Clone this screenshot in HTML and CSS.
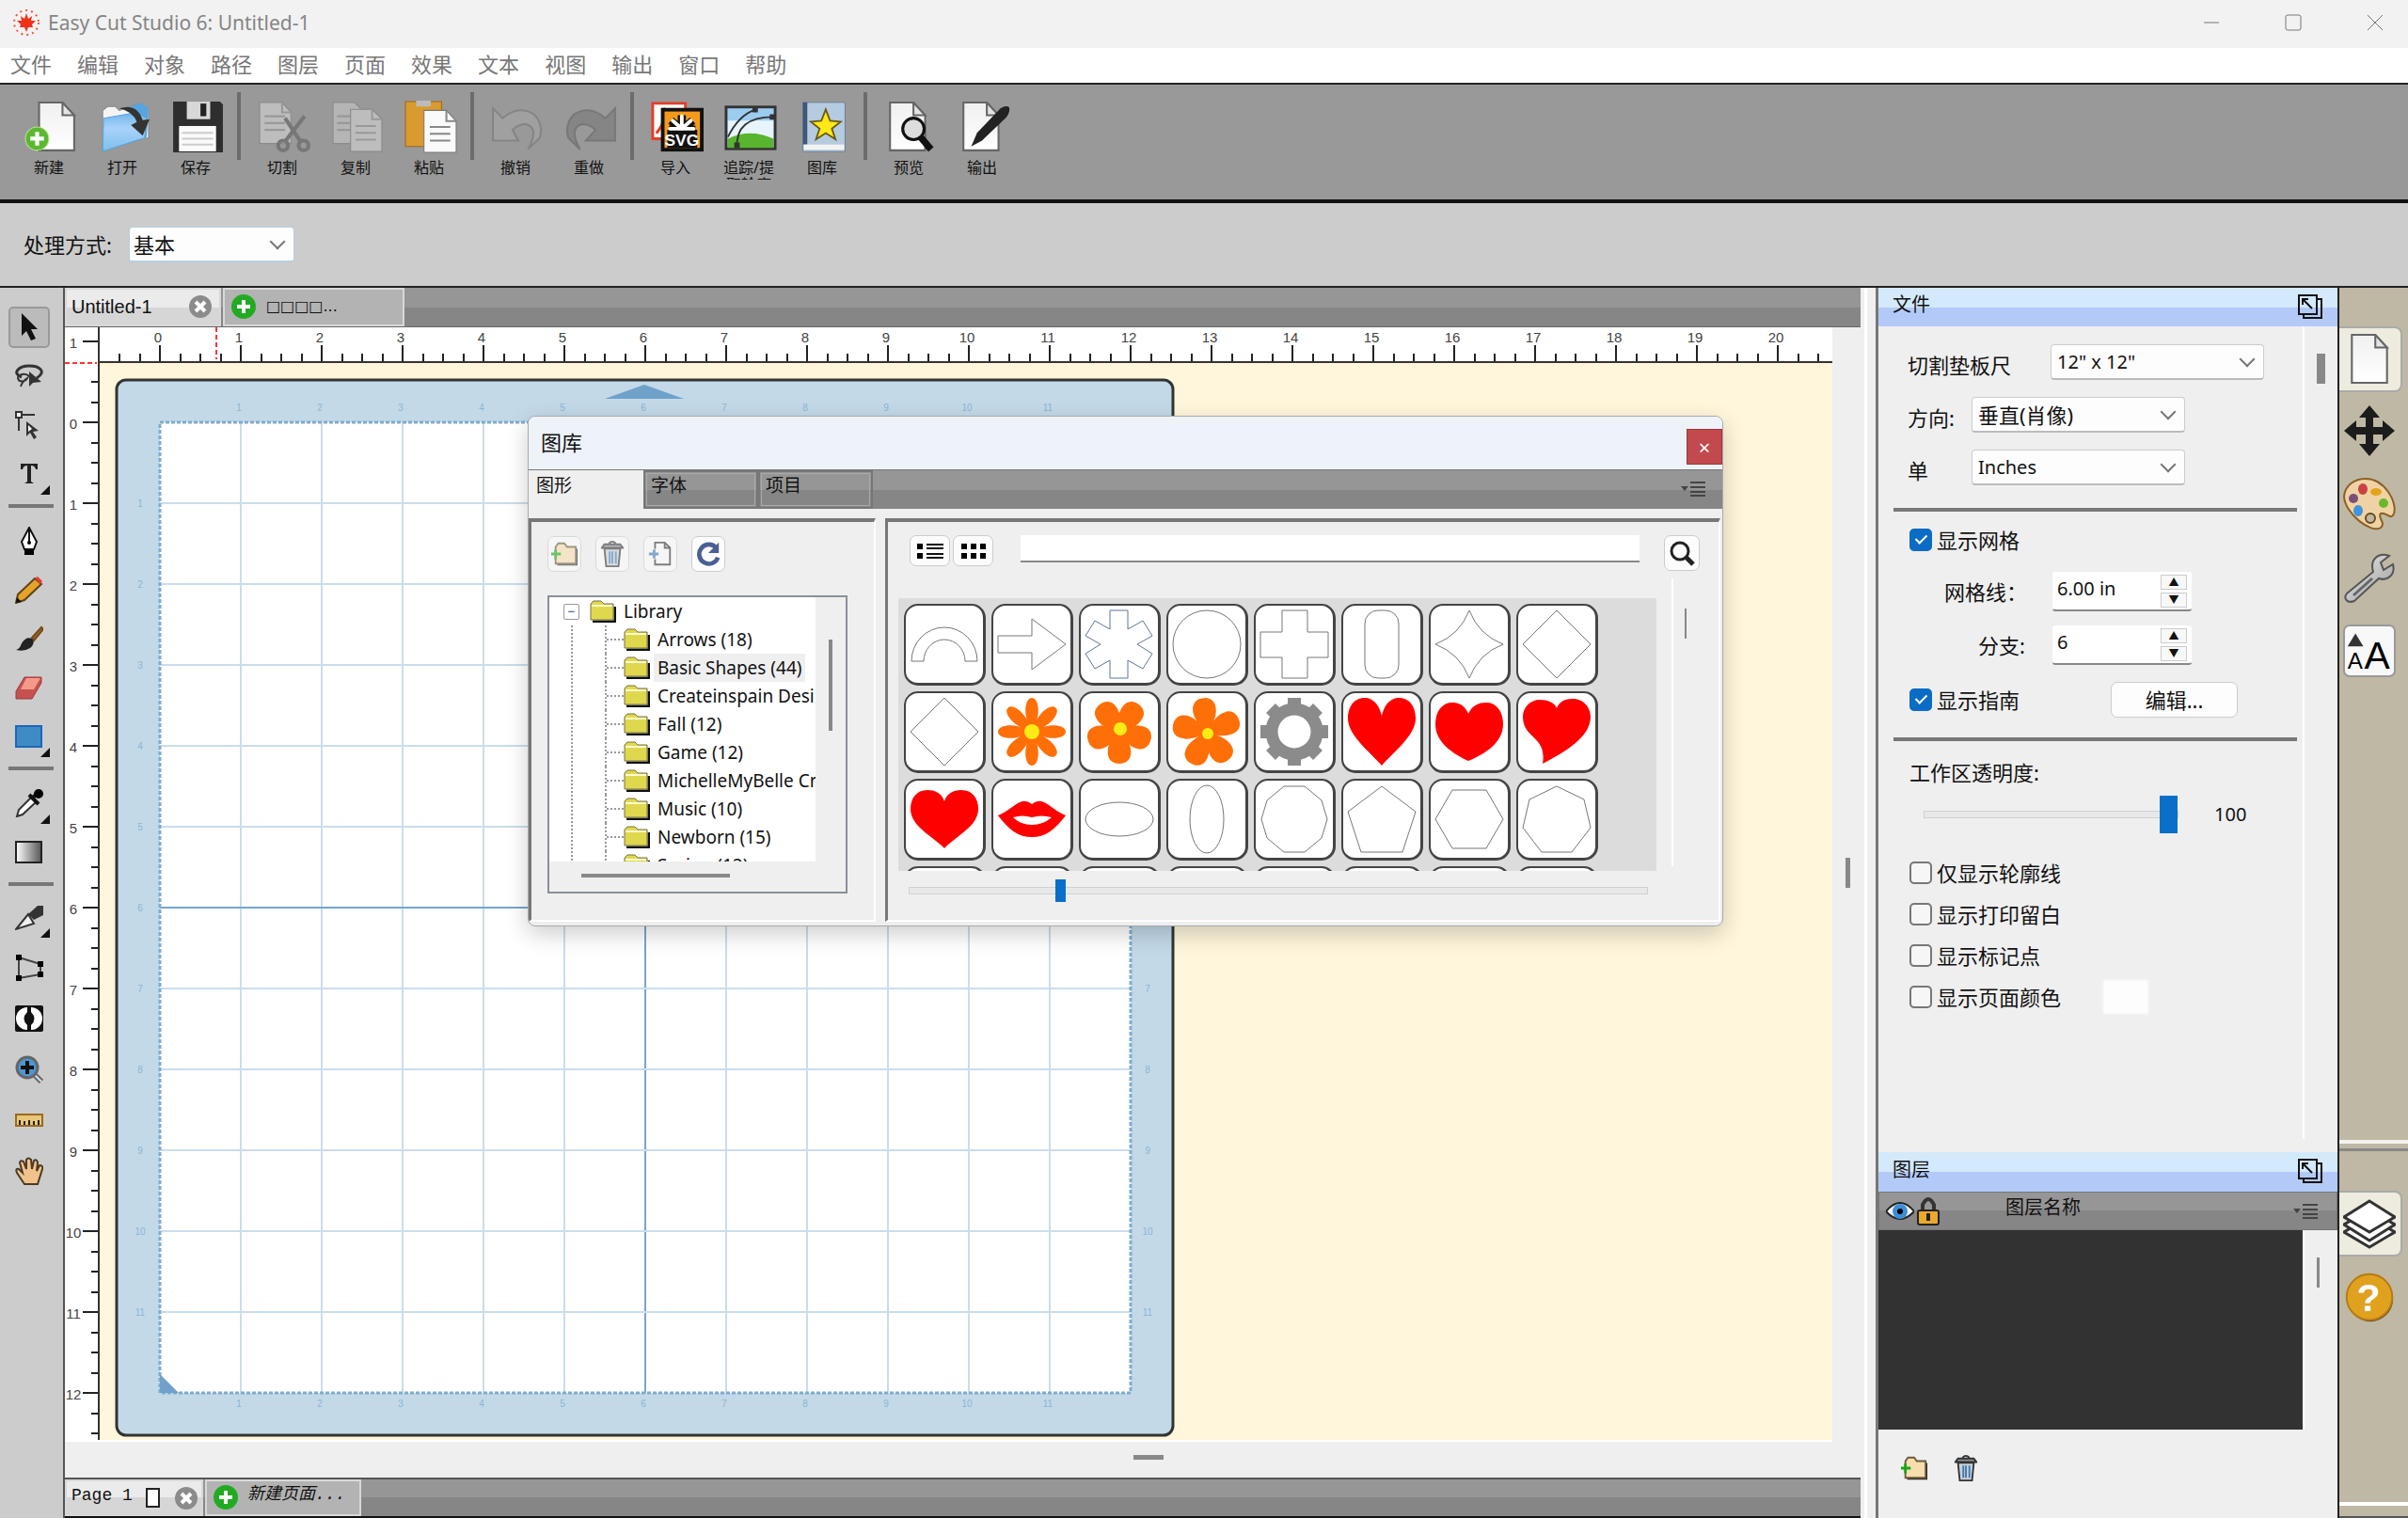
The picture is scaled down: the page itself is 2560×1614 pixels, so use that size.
FILE: index.html
```html
<!DOCTYPE html>
<html lang="zh-CN">
<head>
  <meta charset="UTF-8" />
  <meta name="viewport" content="width=device-width, initial-scale=1" />
  <title>Easy Cut Studio 6: Untitled-1</title>
  <link rel="stylesheet" href="styles.css">
</head>
<body>

<!-- shared icon parts -->
<svg class="defs" aria-hidden="true">
  <defs>
    <linearGradient id="gPaper" x1="0" y1="0" x2="0" y2="1"><stop offset="0" stop-color="#f0f0f0"/><stop offset="1" stop-color="#fff"/></linearGradient>
    <linearGradient id="gFade" x1="0" y1="0" x2="1" y2="0"><stop offset="0" stop-color="#fff"/><stop offset="1" stop-color="#555"/></linearGradient>
    <linearGradient id="gFolder" x1="0" y1="0" x2="0" y2="1"><stop offset="0" stop-color="#6fb4e8"/><stop offset=".4" stop-color="#a9d2fb"/><stop offset="1" stop-color="#7cc0ec"/></linearGradient>
    <linearGradient id="gSteel" x1="0" y1="0" x2="1" y2="1"><stop offset="0" stop-color="#eee"/><stop offset="1" stop-color="#999"/></linearGradient>
    <symbol id="doc" viewBox="0 0 40 52"><path d="M2 1H26L38 14V50H2Z" fill="url(#gPaper)" stroke="#666" stroke-width="2"/><path d="M26 1V14H38Z" fill="#e4e4e4" stroke="#666" stroke-width="2"/></symbol>
    <symbol id="closeTab" viewBox="0 0 26 26"><circle cx="13" cy="13" r="12" fill="#8b8b8b"/><path d="M8 8L18 18M18 8L8 18" stroke="#fff" stroke-width="4"/></symbol>
    <symbol id="addTab" viewBox="0 0 26 26"><circle cx="13" cy="13" r="13" fill="#22ab22"/><path d="M13 6V20M6 13H20" stroke="#fff" stroke-width="4"/></symbol>
    <symbol id="popout" viewBox="0 0 28 28"><path d="M22 6H26V26H7V22" fill="none" stroke="#111" stroke-width="2"/><path d="M2 2H21V22H2Z" fill="none" stroke="#111" stroke-width="2"/><path d="M16 16L6 6M6 12V6H12" fill="none" stroke="#111" stroke-width="2"/></symbol>
    <symbol id="listMenu" viewBox="0 0 26 16"><path d="M0 5H8L4 10Z" fill="#444"/><path d="M10 1H26M10 6H26M10 11H26M10 15H26" stroke="#444" stroke-width="2"/></symbol>
    <symbol id="folder" viewBox="0 0 28 24"><path d="M3 23H27V7" fill="none" stroke="#111" stroke-width="3"/><path d="M1 21V4L4 1H12L15 4H25V21Z" fill="#e0d84c" stroke="#777047" stroke-width="1"/><path d="M2 6H24" stroke="#fffbd0" stroke-width="2"/></symbol>
    <symbol id="folderAdd" viewBox="0 0 30 28"><path d="M7 26H29V8" fill="none" stroke="#222" stroke-width="2"/><path d="M5 25V6L8 2H15L18 6H28V25Z" fill="#f7deaf" stroke="#6b5a3a" stroke-width="2"/><path d="M0 14H11M5 9V20" stroke="#19a519" stroke-width="3"/></symbol>
    <symbol id="trash" viewBox="0 0 26 30"><path d="M4 9H22L20 29H6Z" fill="#c9d2da" stroke="#333" stroke-width="2"/><path d="M1 8H25L22 4H4Z" fill="#8c9299" stroke="#333" stroke-width="2"/><path d="M9 3Q13 -1 17 3" fill="none" stroke="#333" stroke-width="2"/><path d="M10 12V26M13 12V26M17 12V26" stroke="#3e78b3" stroke-width="2"/></symbol>
    <symbol id="petal" viewBox="0 0 72 72"><path d="M36 36C26 20 28 0 36 0S46 20 36 36Z"/></symbol>
    <symbol id="roundPetal" viewBox="0 0 72 72"><path d="M36 38C30 30 22 20 24 9C26 -3 46 -3 48 9C50 20 42 30 36 38Z"/></symbol>
  </defs>
</svg>

<header class="titlebar">
  <svg class="logo" viewBox="0 0 30 30"><circle cx="15" cy="15" r="13" fill="none" stroke="#f2543a" stroke-width="2" stroke-dasharray="2 4"/><path d="M15 5L17 11L21 8L20 13L25 13L21 17L22 20L17 20L15 25L13 20L8 20L9 17L5 13L10 13L9 8L13 11Z" fill="#f03018"/></svg>
  <h1>Easy Cut Studio 6: Untitled-1</h1>
  <div class="window-buttons">
    <button aria-label="最小化"><svg viewBox="0 0 18 18"><path d="M1 9H17"/></svg></button>
    <button aria-label="最大化"><svg viewBox="0 0 18 18"><rect x="1" y="1" width="16" height="16" rx="2"/></svg></button>
    <button aria-label="关闭"><svg viewBox="0 0 18 18"><path d="M1 1L17 17M17 1L1 17"/></svg></button>
  </div>
</header>

<nav class="menubar">
  <a href="#">文件</a><a href="#">编辑</a><a href="#">对象</a><a href="#">路径</a><a href="#">图层</a><a href="#">页面</a><a href="#">效果</a><a href="#">文本</a><a href="#">视图</a><a href="#">输出</a><a href="#">窗口</a><a href="#">帮助</a>
</nav>

<div class="toolbar">
  <button><svg viewBox="0 0 54 54"><use href="#doc" x="13" y="1" width="40" height="52"/><circle cx="13" cy="39" r="12" fill="#5cb830" stroke="#b9e39a"/><path d="M13 32V46M6 39H20" stroke="#fff" stroke-width="4"/></svg><span>新建</span></button>
  <button><svg viewBox="0 0 54 54"><path d="M5 50V10L10 6H18L22 10L42 3L52 8V38Z" fill="#f4f4f4" stroke="#888"/><path d="M34 6L44 2L52 8L50 38L30 40Z" fill="#57a5e0"/><path d="M6 18L40 12L50 18L48 38L5 52Z" fill="url(#gFolder)" stroke="#5aa4d8"/><path d="M22 8Q40 2 46 20L53 19L46 36L34 25L40 22Q36 11 22 8Z" fill="#333"/></svg><span>打开</span></button>
  <button><svg viewBox="0 0 54 54"><path d="M2 1H50L53 4V53H2Z" fill="#2e2e2e"/><rect x="16" y="1" width="24" height="18" fill="#d8d8d8"/><rect x="30" y="3" width="6" height="13" fill="#222"/><rect x="8" y="26" width="38" height="26" fill="#fafafa"/><path d="M11 33H43M11 39H43M11 45H43" stroke="#ccc" stroke-width="2"/></svg><span>保存</span></button>
  <i class="sep"></i>
  <button class="dim"><svg viewBox="0 0 54 54"><path d="M2 2H25L34 12V44H2Z" fill="#bdbdbd" stroke="#8a8a8a"/><path d="M25 2V12H34M7 16H28M7 23H28M7 30H28" fill="none" stroke="#999" stroke-width="2"/><path d="M48 16L28 42M28 18L44 42" stroke="#777" stroke-width="4"/><circle cx="26" cy="46" r="5" fill="none" stroke="#777" stroke-width="4"/><circle cx="47" cy="46" r="5" fill="none" stroke="#777" stroke-width="4"/></svg><span>切割</span></button>
  <button class="dim"><svg viewBox="0 0 54 54"><path d="M2 2H24L32 10V44H2Z" fill="#b5b5b5" stroke="#8a8a8a"/><path d="M6 16H20M6 23H20M6 30H20" stroke="#999" stroke-width="2"/><path d="M20 9H42L52 19V52H20Z" fill="#bdbdbd" stroke="#888"/><path d="M42 9V19H52M25 26H46M25 33H46M25 40H46" fill="none" stroke="#999" stroke-width="2"/></svg><span>复制</span></button>
  <button><svg viewBox="0 0 54 54"><rect x="1" y="1" width="37" height="46" fill="#d99a2f" stroke="#a26a12"/><path d="M12 0H27V6H12Z" fill="#bbb"/><path d="M20 10H43L53 21V53H20Z" fill="#fafafa" stroke="#777"/><path d="M43 10V21H53M26 27H47M26 34H47M26 41H47" fill="none" stroke="#888" stroke-width="2"/></svg><span>粘贴</span></button>
  <i class="sep"></i>
  <button class="dim"><svg viewBox="0 0 54 54"><path d="M2 8L12 18Q28 4 44 14Q54 24 50 38L38 50Q50 28 36 24Q28 24 22 30L28 41H2Z" fill="#a0a0a0" stroke="#858585" stroke-width="2"/></svg><span>撤销</span></button>
  <button class="dim"><svg viewBox="0 0 54 54"><path d="M52 8L42 18Q26 4 10 14Q0 24 4 38L16 50Q4 28 18 24Q26 24 32 30L22 41H52Z" fill="#858585" stroke="#787878" stroke-width="2"/></svg><span>重做</span></button>
  <i class="sep"></i>
  <button><svg viewBox="0 0 58 54"><path d="M2 1H38V40H2Z" fill="#fff" stroke="#e43d28" stroke-width="3"/><path d="M14 6Q18 20 6 34" fill="none" stroke="#e43d28" stroke-width="3"/><rect x="13" y="8" width="43" height="44" fill="#f49a1a" stroke="#111" stroke-width="4"/><path d="M18 30H51V50H18Z" fill="#111"/><g stroke="#111" stroke-width="9"><path d="M34 30V14M34 30L22 20M34 30L46 20M34 30H20M34 30H49"/></g><g stroke="#fff" stroke-width="4" stroke-linecap="round"><path d="M34 29V15M34 29L24 20M34 29L44 20M34 29H21M34 29H47"/></g><text x="34" y="48" text-anchor="middle" class="svg-word">SVG</text></svg><span>导入</span></button>
  <button><svg viewBox="0 0 58 54"><rect x="2" y="5" width="54" height="46" fill="#9bcdf0" stroke="#333" stroke-width="3"/><rect x="4" y="20" width="50" height="20" fill="#e8f4fc"/><path d="M4 40Q28 28 54 40V50H4Z" fill="#58b52d"/><path d="M14 50Q12 16 54 16M4 38Q16 14 34 8" fill="none" stroke="#333" stroke-width="2"/><path d="M11 44H17V50H11ZM50 13H56V19H50ZM31 5H37V11H31Z" fill="#333"/></svg><span>追踪/提取轮廓</span></button>
  <button><svg viewBox="0 0 54 60"><path d="M3 2H51V58H3Z" fill="#b5cbe0" stroke="#6b7c90"/><path d="M3 2H8V50H3Z" fill="#41577a"/><rect x="4" y="50" width="46" height="6" fill="#f3f3f3"/><path d="M29 10L34 23L46 24L36 32L40 44L29 37L18 44L22 32L12 24L24 23Z" fill="#ffe81a" stroke="#6b5a10" stroke-width="2"/></svg><span>图库</span></button>
  <i class="sep"></i>
  <button><svg viewBox="0 0 54 54"><use href="#doc" x="4" y="1" width="40" height="52"/><circle cx="30" cy="29" r="11" fill="#ddd" stroke="#111" stroke-width="3"/><path d="M37 37L48 50" stroke="#111" stroke-width="7"/></svg><span>预览</span></button>
  <button><svg viewBox="0 0 54 54"><use href="#doc" x="4" y="1" width="40" height="52"/><path d="M14 47L20 33L44 8Q50 4 53 7Q54 12 50 17L25 41Z" fill="#222"/></svg><span>输出</span></button>
</div>

<div class="optionbar">
  <label for="mode">处理方式:</label>
  <span class="select mode"><select id="mode"><option>基本</option></select></span>
</div>

<main>
  <aside class="tools">
    <div class="tool-group">
      <button class="active" aria-label="选择"><svg viewBox="0 0 30 30"><path d="M7 0V24L12 19L17 29L22 27L17 17L24 17Z" fill="#111"/></svg></button>
      <button aria-label="套索"><svg viewBox="0 0 30 30"><path d="M7 16C-4 12 4 4 15 4S34 10 23 17" fill="none" stroke="#333" stroke-width="3"/><path d="M15 15C11 11 3 13 3 17C4 22 11 21 13 17Q8 20 6 26" fill="none" stroke="#333" stroke-width="2"/><path d="M15 10V26L19 22L28 21Z" fill="#333"/></svg></button>
      <button aria-label="编辑节点"><svg viewBox="0 0 30 30"><path d="M1 1H7V7H1ZM7 4H21M4 7V21" fill="#fff" stroke="#333" stroke-width="2"/><path d="M12 11V27L16 23L20 30L23 28L19 22L25 21Z" fill="#333"/><path d="M14 15V22L18 19Z" fill="#fff"/></svg></button>
      <button class="more" aria-label="文本"><svg viewBox="0 0 30 30"><path d="M6 4H24V10H22Q21 6 17 6V23L20 25H10L13 23V6Q9 6 8 10H6Z" fill="#222"/></svg></button>
    </div>
    <div class="tool-group">
      <button aria-label="钢笔"><svg viewBox="0 0 30 30"><path d="M15 1L23 16L20 24H10L7 16Z" fill="#fff" stroke="#111" stroke-width="2"/><path d="M15 2V16" stroke="#111" stroke-width="2"/><circle cx="15" cy="17" r="2"/><path d="M10 25H20V30H10Z"/></svg></button>
      <button aria-label="铅笔"><svg viewBox="0 0 30 30"><path d="M1 29L3 20L21 3L28 9L10 26Z" fill="#e5a32c" stroke="#5d4316" stroke-width="2"/><path d="M21 3L24 1L29 6L27 9Z" fill="#e53b32"/><path d="M1 29L2 23L7 28Z" fill="#111"/></svg></button>
      <button aria-label="画笔"><svg viewBox="0 0 30 30"><path d="M18 14L28 3L30 5L20 17Z" fill="#a86f25" stroke="#74491a" stroke-width="2"/><path d="M1 27Q5 26 7 20Q12 12 18 15Q22 20 16 25Q10 29 1 27Z" fill="#222"/></svg></button>
      <button aria-label="橡皮"><svg viewBox="0 0 30 30"><path d="M10 4H28L28 10L18 27H1V19Z" fill="#c65151" stroke="#a03a3a"/><path d="M12 5H27L20 17H6Z" fill="#f49a8a"/></svg></button>
      <button class="more" aria-label="矩形"><svg viewBox="0 0 30 30"><rect x="1" y="4" width="27" height="22" fill="#3f8cc5" stroke="#1868b8" stroke-width="2"/></svg></button>
    </div>
    <div class="tool-group">
      <button class="more" aria-label="吸管"><svg viewBox="0 0 30 30"><path d="M2 29L4 22L17 9L22 14L8 27Z" fill="#fff" stroke="#333" stroke-width="2"/><path d="M15 6L25 16M18 10L25 3" stroke="#111" stroke-width="4"/><circle cx="25" cy="5" r="5"/></svg></button>
      <button aria-label="渐变"><svg viewBox="0 0 30 30"><rect x="1" y="4" width="27" height="22" fill="url(#gFade)" stroke="#222" stroke-width="2"/></svg></button>
    </div>
    <div class="tool-group tall">
      <button class="more" aria-label="刻刀"><svg viewBox="0 0 30 30"><path d="M1 28L14 12L20 22Z" fill="#eee" stroke="#333" stroke-width="2"/><path d="M14 12L24 3H30V13L20 18Z" fill="#333"/></svg></button>
      <button aria-label="变形"><svg viewBox="0 0 30 30"><path d="M4 4L27 11V22L4 26Z" fill="none" stroke="#444" stroke-width="2"/><path d="M1 1H7V7H1ZM1 23H7V29H1ZM24 8H30V14H24ZM24 19H30V25H24Z"/></svg></button>
      <button aria-label="反转"><svg viewBox="0 0 30 30"><rect y="1" width="30" height="28" rx="2" fill="#111"/><path d="M13 3A12 12 0 0 0 13 27V22Q6 15 13 8ZM17 3A12 12 0 0 1 17 27V22Q24 15 17 8Z" fill="#fff"/></svg></button>
      <button aria-label="缩放"><svg viewBox="0 0 30 30"><path d="M20 20L28 28" stroke="#666" stroke-width="6"/><path d="M20 20L28 28" stroke="#cfe0ee" stroke-width="2"/><circle cx="13" cy="13" r="11" fill="#4b97d4" stroke="#666" stroke-width="3"/><path d="M13 6V20M6 13H20" stroke="#111" stroke-width="4"/></svg></button>
      <button aria-label="测量"><svg viewBox="0 0 30 30"><rect x="1" y="9" width="28" height="12" fill="#e9c77a" stroke="#9c6a1d" stroke-width="2"/><path d="M5 20V15M10 20V16M15 20V15M20 20V16M25 20V15" stroke="#222" stroke-width="2"/></svg></button>
      <button aria-label="抓手"><svg viewBox="0 0 30 30"><path d="M10 29L2 17Q0 12 4 13L8 17L5 6Q6 3 9 5L12 13L12 3Q14 0 17 3L18 13L20 4Q23 2 24 6L23 15L26 9Q30 9 29 13L24 29Z" fill="#f2c28c" stroke="#4c3a25" stroke-width="2"/></svg></button>
    </div>
  </aside>

  <section class="editor">
    <div class="tabs">
      <div class="tab doc-tab current"><a href="#">Untitled-1</a><button aria-label="关闭标签"><svg viewBox="0 0 26 26"><use href="#closeTab"/></svg></button></div>
      <div class="tab new-doc"><button aria-label="新建文档"><svg viewBox="0 0 26 26"><use href="#addTab"/></svg></button><a href="#" class="boxes">□□□□...</a></div>
    </div>
    <div class="stage">
      <svg class="canvas" id="canvas"></svg>
      <div class="vscroll"><i></i></div>
    </div>
    <div class="hscroll"><i></i></div>
    <div class="tabs pages">
      <div class="tab page-tab current"><a href="#">Page 1</a><i class="page-icon"></i><button aria-label="关闭页面"><svg viewBox="0 0 26 26"><use href="#closeTab"/></svg></button></div>
      <div class="tab new-page"><button aria-label="新建页面"><svg viewBox="0 0 26 26"><use href="#addTab"/></svg></button><a href="#">新建页面...</a></div>
    </div>
  </section>

  <i class="splitter"></i>

  <section class="panels">
    <div class="panel file-panel">
      <div class="panel-title"><h2>文件</h2><button aria-label="弹出"><svg viewBox="0 0 28 28"><use href="#popout"/></svg></button></div>
      <div class="scroll-area">
        <form class="settings">
          <div class="row select-row">
            <label for="mat">切割垫板尺</label>
            <span class="select mat-size"><select id="mat"><option>12" x 12"</option></select></span>
          </div>
          <div class="row select-row">
            <label for="dir">方向:</label>
            <span class="select"><select id="dir"><option>垂直(肖像)</option></select></span>
          </div>
          <div class="row select-row">
            <label for="unit">单</label>
            <span class="select"><select id="unit"><option>Inches</option></select></span>
          </div>
          <hr>
          <label class="check"><input type="checkbox" checked>显示网格</label>
          <div class="row spin-row">
            <label for="grid">网格线：</label>
            <span class="spin"><input id="grid" type="text" value="6.00 in"><span><button type="button" aria-label="增加">▲</button><button type="button" aria-label="减少">▼</button></span></span>
          </div>
          <div class="row spin-row">
            <label for="sub">分支:</label>
            <span class="spin"><input id="sub" type="text" value="6"><span><button type="button" aria-label="增加">▲</button><button type="button" aria-label="减少">▼</button></span></span>
          </div>
          <div class="row guide-row">
            <label class="check"><input type="checkbox" checked>显示指南</label>
            <button type="button" class="edit">编辑...</button>
          </div>
          <hr>
          <label class="opacity-label" for="opacity">工作区透明度:</label>
          <div class="row opacity-row"><input id="opacity" type="range" min="0" max="100" value="100"><output for="opacity">100</output></div>
          <div class="checks">
            <label class="check"><input type="checkbox">仅显示轮廓线</label>
            <label class="check"><input type="checkbox">显示打印留白</label>
            <label class="check"><input type="checkbox">显示标记点</label>
            <div class="row"><label class="check"><input type="checkbox">显示页面颜色</label><button type="button" class="swatch" aria-label="页面颜色"></button></div>
          </div>
        </form>
        <div class="track"><i></i></div>
      </div>
    </div>
    <div class="panel layer-panel">
      <div class="panel-title"><h2>图层</h2><button aria-label="弹出"><svg viewBox="0 0 28 28"><use href="#popout"/></svg></button></div>
      <div class="layer-head">
        <svg class="eye" viewBox="0 0 30 20"><path d="M0 10Q15 -8 30 10Q15 26 0 10Z" fill="#fff" stroke="#222" stroke-width="2"/><circle cx="15" cy="10" r="8" fill="#3c8fd6"/><circle cx="15" cy="10" r="3"/></svg>
        <svg class="lock" viewBox="0 0 24 30"><path d="M6 15V8Q12 -4 18 8V15" fill="none" stroke="#333" stroke-width="4"/><rect x="1" y="14" width="22" height="15" rx="2" fill="#e9a92c" stroke="#222" stroke-width="2"/><path d="M12 17V25" stroke="#222" stroke-width="4"/></svg>
        <span>图层名称</span>
        <svg class="menu-icon" viewBox="0 0 26 16"><use href="#listMenu"/></svg>
      </div>
      <div class="layer-body"><div class="layer-list"></div><div class="track"><i></i></div></div>
      <div class="layer-actions">
        <button aria-label="新建图层"><svg viewBox="0 0 30 28"><use href="#folderAdd"/></svg></button>
        <button aria-label="删除图层"><svg viewBox="0 0 26 30"><use href="#trash"/></svg></button>
      </div>
    </div>
  </section>

  <aside class="rail">
    <div class="rail-top">
      <button class="on" aria-label="文件"><svg viewBox="0 0 56 56"><use href="#doc" x="6" y="1" width="44" height="54"/></svg></button>
      <button aria-label="位置"><svg viewBox="0 0 56 56"><path d="M28 1L39 14H32V24H42V17L55 28L42 39V32H32V42H39L28 55L17 42H24V32H14V39L1 28L14 17V24H24V14H17Z" fill="#1c1c1c"/></svg></button>
      <button aria-label="颜色"><svg viewBox="0 0 56 56"><path d="M24 1C44 1 58 26 54 38C51 46 46 36 40 38C36 42 46 48 40 53C30 60 2 38 1 20C2 8 12 1 24 1Z" fill="#f0d3a4" stroke="#8a6026" stroke-width="2"/><ellipse cx="21" cy="12" rx="5" ry="6" fill="#cb4141"/><ellipse cx="35" cy="15" rx="6" ry="4" fill="#e3a41b"/><circle cx="43" cy="27" r="5" fill="#6bb82d"/><circle cx="11" cy="22" r="5" fill="#7b4f78"/><ellipse cx="16" cy="35" rx="5" ry="6" fill="#3f95dd"/><circle cx="29" cy="43" r="5" fill="#bfb8a4" stroke="#6c4a1c" stroke-width="2"/></svg></button>
      <button aria-label="设置"><svg viewBox="0 0 56 56"><path d="M4 45L32 22C28 8 38 1 49 5L40 12L43 20L53 14C56 26 46 32 38 29L12 53C4 56 0 50 4 45Z" fill="url(#gSteel)" stroke="#555" stroke-width="2"/><path d="M11 47L31 29" stroke="#666" stroke-width="3"/></svg></button>
      <button class="aa" aria-label="文本"><svg viewBox="0 0 56 56"><path d="M3 23H21L12 8Z" fill="#333"/><text x="3" y="48" font-size="26">A</text><text x="22" y="48" font-size="44">A</text></svg></button>
    </div>
    <div class="rail-bottom">
      <button class="on" aria-label="图层"><svg viewBox="0 0 56 56"><g fill="#fff" stroke="#333" stroke-width="3"><path d="M28 21L55 37L28 53L1 37Z"/><path d="M28 13L55 29L28 46L1 29Z"/><path d="M28 4L55 21L28 37L1 21Z"/></g></svg></button>
      <button aria-label="帮助"><svg viewBox="0 0 56 60"><circle cx="29" cy="31" r="26" fill="#695429"/><circle cx="28" cy="29" r="26" fill="#e0a11e" stroke="#b67a10" stroke-width="2"/><text x="27" y="45" text-anchor="middle" font-size="44" class="help">?</text></svg></button>
    </div>
  </aside>
</main>

<section class="dialog" role="dialog" aria-label="图库">
  <div class="dialog-title"><h2>图库</h2><button aria-label="关闭">×</button></div>
  <div class="dialog-tabs">
    <button class="current">图形</button><button>字体</button><button>项目</button>
    <svg class="menu-icon" viewBox="0 0 26 16"><use href="#listMenu"/></svg>
  </div>
  <div class="dialog-body">
    <div class="pane tree-pane">
      <div class="tree-tools">
        <button disabled aria-label="新建文件夹"><svg viewBox="0 0 30 28"><use href="#folderAdd"/></svg></button>
        <button disabled aria-label="删除"><svg viewBox="0 0 26 30"><use href="#trash"/></svg></button>
        <button disabled aria-label="导入图形"><svg viewBox="0 0 30 28"><path d="M9 8V1H20L26 7V26H9V20" fill="none" stroke="#333" stroke-width="2"/><path d="M20 1V7H26" fill="none" stroke="#333" stroke-width="2"/><path d="M2 14H13M8 9V19" stroke="#3e78b3" stroke-width="3"/></svg></button>
        <button aria-label="刷新"><svg viewBox="0 0 30 30"><path d="M24 8A11 11 0 1 0 26 19" fill="none" stroke="#4a5f94" stroke-width="5"/><path d="M27 2V14H15Z" fill="#4a5f94"/></svg></button>
      </div>
      <div class="tree-box">
        <div class="tree">
          <div class="root"><button aria-label="折叠">−</button><svg viewBox="0 0 28 24"><use href="#folder"/></svg><a href="#">Library</a></div>
          <ul>
            <li><svg viewBox="0 0 28 24"><use href="#folder"/></svg><a href="#">Arrows (18)</a></li>
            <li><svg viewBox="0 0 28 24"><use href="#folder"/></svg><a href="#" class="picked">Basic Shapes (44)</a></li>
            <li><svg viewBox="0 0 28 24"><use href="#folder"/></svg><a href="#">Createinspain Desi</a></li>
            <li><svg viewBox="0 0 28 24"><use href="#folder"/></svg><a href="#">Fall (12)</a></li>
            <li><svg viewBox="0 0 28 24"><use href="#folder"/></svg><a href="#">Game (12)</a></li>
            <li><svg viewBox="0 0 28 24"><use href="#folder"/></svg><a href="#">MichelleMyBelle Cre</a></li>
            <li><svg viewBox="0 0 28 24"><use href="#folder"/></svg><a href="#">Music (10)</a></li>
            <li><svg viewBox="0 0 28 24"><use href="#folder"/></svg><a href="#">Newborn (15)</a></li>
            <li><svg viewBox="0 0 28 24"><use href="#folder"/></svg><a href="#">Spring (12)</a></li>
          </ul>
        </div>
        <i class="thumb-v"></i>
        <i class="thumb-h"></i>
      </div>
    </div>
    <div class="pane shape-pane">
      <div class="search-row">
        <button class="view" aria-label="列表"><svg viewBox="0 0 28 20"><path d="M0 2H6V8H0ZM0 12H6V18H0Z"/><path d="M10 3H28M10 7H28M10 13H28M10 17H28" stroke="#111" stroke-width="2"/></svg></button>
        <button class="view" aria-label="网格"><svg viewBox="0 0 28 20"><path d="M1 2H7V8H1ZM11 2H17V8H11ZM21 2H27V8H21ZM1 12H7V18H1ZM11 12H17V18H11ZM21 12H27V18H21Z"/></svg></button>
        <input type="text" aria-label="搜索">
        <button class="find" aria-label="搜索"><svg viewBox="0 0 28 28"><circle cx="12" cy="12" r="9" fill="none" stroke="#222" stroke-width="3"/><path d="M18 18L26 26" stroke="#222" stroke-width="5"/></svg></button>
      </div>
      <div class="shape-area">
        <div class="shapes">
          <button><svg viewBox="0 0 72 72"><path d="M1 54A35 36 0 0 1 71 54H58A22 23 0 0 0 14 54Z"/></svg></button>
          <button><svg viewBox="0 0 72 72"><path d="M0 27H36V9L72 36L36 63V45H0Z"/></svg></button>
          <button><svg viewBox="0 0 72 72" class="blue"><path d="M26 0H45V20L61 11L71 27L55 36L71 46L61 62L45 53V72H26V53L10 62L0 46L16 36L0 27L10 11L26 20Z"/></svg></button>
          <button><svg viewBox="0 0 72 72"><circle cx="36" cy="36" r="36"/></svg></button>
          <button><svg viewBox="0 0 72 72"><path d="M23 0H50V23H72V50H50V72H23V50H0V23H23Z"/></svg></button>
          <button><svg viewBox="0 0 72 72"><rect x="18" width="36" height="72" rx="14"/></svg></button>
          <button><svg viewBox="0 0 72 72"><path d="M36 0Q46 26 72 36Q46 46 36 72Q26 46 0 36Q26 26 36 0Z"/></svg></button>
          <button><svg viewBox="0 0 72 72"><path d="M36 0L72 36L36 72L0 36Z"/></svg></button>

          <button><svg viewBox="0 0 72 72"><path d="M36 0L72 36L36 72L0 36Z"/></svg></button>
          <button><svg viewBox="0 0 72 72" class="flower"><use href="#petal"/><use href="#petal" transform="rotate(45 36 36)"/><use href="#petal" transform="rotate(90 36 36)"/><use href="#petal" transform="rotate(135 36 36)"/><use href="#petal" transform="rotate(180 36 36)"/><use href="#petal" transform="rotate(225 36 36)"/><use href="#petal" transform="rotate(270 36 36)"/><use href="#petal" transform="rotate(315 36 36)"/><circle cx="36" cy="36" r="8"/></svg></button>
          <button><svg viewBox="0 0 72 72" class="flower"><use href="#roundPetal" transform="rotate(36 36 35)"/><use href="#roundPetal" transform="rotate(108 36 35)"/><use href="#roundPetal" transform="rotate(180 36 35)"/><use href="#roundPetal" transform="rotate(252 36 35)"/><use href="#roundPetal" transform="rotate(324 36 35)"/><circle cx="37" cy="33" r="7"/></svg></button>
          <button><svg viewBox="0 0 72 72" class="flower"><use href="#roundPetal" transform="rotate(-6 36 37)"/><use href="#roundPetal" transform="rotate(66 36 37)"/><use href="#roundPetal" transform="rotate(142 36 37)"/><use href="#roundPetal" transform="rotate(206 36 37)"/><use href="#roundPetal" transform="rotate(284 36 37)"/><circle cx="37" cy="38" r="6"/></svg></button>
          <button><svg viewBox="0 0 72 72" class="gear"><circle cx="36" cy="36" r="24" stroke-width="13"/><path d="M36 0V10M36 62V72M0 36H10M62 36H72M11 11L18 18M54 54L61 61M11 61L18 54M54 18L61 11" stroke-width="14"/></svg></button>
          <button><svg viewBox="0 0 72 72" class="red"><path d="M36 19C32 2 22 0 18 0C6 0 0 10 0 22C0 40 24 58 36 72C48 58 72 40 72 22C72 10 66 0 54 0C50 0 40 2 36 19Z"/></svg></button>
          <button><svg viewBox="0 0 72 72" class="red"><path d="M35 17C31 7 24 5 18 5C6 5 0 16 0 28C0 48 20 60 35 67C52 60 72 48 72 28C72 16 66 5 54 5C46 5 39 8 35 17Z"/></svg></button>
          <button><svg viewBox="0 0 72 72" class="red"><path d="M36 11C34 5 26 2 18 2C8 2 0 10 0 20C0 44 26 40 21 70C44 58 72 42 72 20C72 10 64 0 52 1C44 1 38 5 36 11Z"/></svg></button>

          <button><svg viewBox="0 0 72 72" class="red"><path d="M36 17C33 8 26 5 18 5C6 5 0 14 0 25C0 44 24 54 36 67C48 54 72 44 72 25C72 14 66 5 54 5C46 5 39 8 36 17Z"/></svg></button>
          <button><svg viewBox="0 0 72 72" class="red"><path d="M0 32C12 27 20 18 26 17Q31 16 36 20Q41 16 46 17C52 18 60 27 72 32C60 48 50 55 36 55S12 48 0 32Z"/><path d="M16 34Q26 31 36 34Q46 31 57 34Q48 42 36 42T16 34Z" class="mouth"/></svg></button>
          <button><svg viewBox="0 0 72 72"><ellipse cx="36" cy="36" rx="36" ry="18"/></svg></button>
          <button><svg viewBox="0 0 72 72"><ellipse cx="36" cy="36" rx="18" ry="36"/></svg></button>
          <button><svg viewBox="0 0 72 72"><path d="M25 1H47L65 16L71 36L65 56L47 71H25L7 56L1 36L7 16Z"/></svg></button>
          <button><svg viewBox="0 0 72 72"><path d="M36 1L72 28L58 71H14L0 28Z"/></svg></button>
          <button><svg viewBox="0 0 72 72"><path d="M18 5H54L72 36L54 67H18L0 36Z"/></svg></button>
          <button><svg viewBox="0 0 72 72"><path d="M36 1L65 15L72 45L52 71H20L0 45L7 15Z"/></svg></button>

          <button></button><button></button><button></button><button></button><button></button><button></button><button></button><button></button>
        </div>
        <div class="track"><i></i></div>
      </div>
      <input class="size" type="range" min="0" max="100" value="20" aria-label="缩略图大小">
    </div>
  </div>
</section>

<script>
  // rulers and cutting mat, one inch is 86px
  const canvas = document.getElementById('canvas');
  const unit = 86;
  const edge = 36;   // ruler thickness
  const zero = 101;  // where 0 sits on both rulers
  const size = unit * 12;
  let out = '';

  function line(x1, y1, x2, y2, cls) {
    out += `<line x1="${x1}" y1="${y1}" x2="${x2}" y2="${y2}" class="${cls}"/>`;
  }

  function text(x, y, value, cls) {
    out += `<text x="${x}" y="${y}" class="${cls}">${value}</text>`;
  }

  // mat
  out += '<rect x="55" y="56" width="1123" height="1122" rx="10" class="mat"/>';
  out += `<rect x="${zero}" y="${zero}" width="${size}" height="${size}" class="page"/>`;
  for (let i = 1; i < 12; i++) {
    const p = zero + i * unit;
    const cls = i === 6 ? 'grid middle' : 'grid';
    line(p, zero, p, zero + size, cls);
    line(zero, p, zero + size, p, cls);
    text(p - 2, zero - 12, i, 'mat-num');
    text(p - 2, zero + size + 15, i, 'mat-num');
    text(zero - 21, p + 4, i, 'mat-num');
    text(zero + size + 18, p + 4, i, 'mat-num');
  }
  out += `<rect x="${zero}" y="${zero}" width="${size}" height="${size}" class="page-edge"/>`;
  out += '<path d="M574 76L616 61L658 76Z" class="mark"/>';
  out += `<path d="M${zero} ${zero + size - 20}V${zero + size}H${zero + 20}Z" class="mark"/>`;

  // rulers
  out += `<rect width="100%" height="${edge}" class="ruler"/><rect width="${edge}" height="100%" class="ruler"/>`;
  for (let q = -2; q <= 82; q++) {
    const p = zero + Math.round(q * unit / 4);
    line(p, q % 4 ? 28 : 19, p, edge, 'tick');
    if (q % 4 === 0) text(p - 2, 16, q / 4, 'num');
  }
  for (let q = -4; q <= 50; q++) {
    const p = zero + Math.round(q * unit / 4);
    if (q !== -3) line(q % 4 ? 28 : 19, p, edge, p, 'tick');
    if (q % 4 === 0) text(9, p + 7, Math.abs(q / 4), 'num');
  }
  line(edge, edge + 1, '100%', edge + 1, 'axis');
  line(edge, 0, edge, '100%', 'axis');
  line(161, 0, 161, 34, 'cursor');
  line(0, 38, 34, 38, 'cursor');

  canvas.innerHTML = out;
</script>

</body>
</html>
```
FILE: styles.css
```css
* {
  box-sizing: border-box;
}

body {
  margin: 0;
  height: 100vh;
  display: flex;
  flex-direction: column;
  position: relative;
  overflow: hidden;
  background: #efefef;
  color: #111;
  font-family: "Noto Sans", "Noto Sans CJK SC", sans-serif;
  font-size: 22px;
  line-height: 28px;
}

h1, h2 {
  margin: 0;
  font-weight: normal;
}

a {
  color: inherit;
  text-decoration: none;
}

button, input, select {
  font: inherit;
  color: inherit;
  margin: 0;
}

button {
  padding: 0;
  border: none;
  background: none;
}

svg {
  display: block;
}

.defs {
  position: absolute;
  width: 0;
  height: 0;
}

/* Title and menu */
.titlebar {
  flex: none;
  display: flex;
  align-items: center;
  height: 51px;
  padding: 0 0 4px 13px;
  background: #f2f2f2;
}

.logo {
  width: 30px;
  height: 30px;
  margin-right: 8px;
}

.titlebar h1 {
  font-size: 21px;
  color: #858585;
}

.window-buttons {
  display: flex;
  gap: 17px;
  margin-left: auto;
}

.window-buttons button {
  width: 70px;
}

.window-buttons svg {
  width: 18px;
  height: 18px;
  margin: 0 auto;
  fill: none;
  stroke: #777;
  stroke-width: 1;
}

.menubar {
  flex: none;
  display: flex;
  align-items: center;
  gap: 27px;
  height: 37px;
  padding: 0 0 3px 11px;
  background: #fff;
  color: #777;
}

/* Toolbar */
.toolbar {
  flex: none;
  display: flex;
  height: 128px;
  padding: 17px 0 0 13px;
  background: #999;
  border-top: 2px solid #222;
  border-bottom: 4px solid #111;
}

.toolbar button {
  width: 78px;
  height: 84px;
  overflow: hidden;
  display: flex;
  flex-direction: column;
  align-items: center;
}

.toolbar button svg {
  flex: none;
  width: 56px;
  height: 56px;
  margin-left: 4px;
}

.toolbar span {
  width: 64px;
  margin-top: 6px;
  font-size: 16px;
  line-height: 18px;
}

.toolbar .sep {
  width: 4px;
  height: 72px;
  margin: -9px 5px 0;
  background: #6c6c6c;
}

.svg-word {
  font: bold 18px "Liberation Sans", sans-serif;
  fill: #fff;
}

.optionbar {
  flex: none;
  display: flex;
  align-items: center;
  gap: 18px;
  height: 90px;
  padding-left: 25px;
  background: #ccc;
  border-bottom: 2px solid #222;
}

.select {
  position: relative;
  width: 227px;
  height: 38px;
}

.select::after {
  content: "";
  position: absolute;
  right: 12px;
  top: 10px;
  width: 10px;
  height: 10px;
  border: solid #777;
  border-width: 0 2px 2px 0;
  transform: rotate(45deg);
  pointer-events: none;
}

.select select {
  appearance: none;
  width: 100%;
  height: 100%;
  padding: 0 6px;
  border: 1px solid #ccc;
  border-bottom: 2px solid #bbb;
  border-radius: 4px;
  background: #fdfdfd;
}

.select.mode {
  width: 176px;
}

.select.mode select {
  padding: 0 4px;
  border-color: #b8cfe2;
}

main {
  flex: 1;
  min-height: 0;
  display: flex;
}

/* Left tools */
.tools {
  flex: none;
  width: 69px;
  padding: 20px 0 0 9px;
  background: #ccc;
  border-right: 2px solid #555;
}

.tool-group {
  display: flex;
  flex-direction: column;
  gap: 8px;
}

.tool-group.tall {
  gap: 10px;
}

.tool-group + .tool-group {
  margin-top: 10px;
}

.tool-group + .tool-group::before {
  content: "";
  width: 48px;
  height: 4px;
  margin-bottom: 5px;
  background: #777;
}

.tool-group + .tool-group.tall::before {
  margin-bottom: 1px;
}

.tool-group button {
  position: relative;
  display: flex;
  align-items: center;
  justify-content: center;
  width: 44px;
  height: 44px;
}

.tool-group .active {
  border: 2px solid #999;
  border-radius: 5px;
  background: #bbb;
}

.tool-group svg {
  width: 30px;
  height: 30px;
}

.more::after {
  content: "";
  position: absolute;
  right: 0;
  bottom: 0;
  border: 5px solid;
  border-color: transparent #111 #111 transparent;
}

/* Editor */
.editor {
  flex: 1;
  min-width: 0;
  display: flex;
  flex-direction: column;
}

.tabs {
  flex: none;
  display: flex;
  gap: 2px;
  height: 42px;
  background: linear-gradient(#969696 50%, #868686 50%);
  border-bottom: 1px solid #666;
}

.tabs.pages {
  height: 43px;
  border-top: 2px solid #555;
  border-bottom: 2px solid #111;
}

.tab {
  display: flex;
  align-items: center;
  padding: 0 7px 2px;
  border: 2px solid #d8d8d8;
  background: #b3b3b3;
  font-size: 20px;
}

.tab.current {
  background: linear-gradient(#ebebeb 50%, #d6d6d6 50%);
}

.tab svg {
  width: 26px;
  height: 26px;
}

.doc-tab {
  width: 166px;
  justify-content: space-between;
  padding-left: 5px;
  font-family: "Liberation Sans", sans-serif;
}

.new-doc {
  width: 193px;
  gap: 11px;
}

.boxes {
  font: 16px "DejaVu Sans", sans-serif;
}

.pages .tab {
  font-family: "Liberation Mono", "Noto Sans CJK SC", monospace;
  font-size: 18px;
}

.pages a {
  padding-bottom: 5px;
}

.page-tab {
  width: 147px;
  justify-content: space-between;
  padding: 0 3px 0 5px;
}

.page-icon {
  width: 15px;
  height: 21px;
  border: 2px solid #222;
  background: #fff;
}

.new-page {
  width: 166px;
  gap: 10px;
  font-style: italic;
}

.stage {
  flex: 1;
  min-height: 0;
  display: flex;
}

.canvas {
  flex: 1;
  min-width: 0;
  height: 100%;
  background: #fff6db;
  border-bottom: 2px solid #fff;
}

.vscroll {
  flex: none;
  display: flex;
  align-items: center;
  width: 30px;
  padding-left: 14px;
}

.vscroll i {
  width: 5px;
  height: 32px;
  margin-top: -26px;
  background: #888;
}

.hscroll {
  flex: none;
  height: 38px;
  padding: 14px 0 0 1136px;
}

.hscroll i {
  display: block;
  width: 32px;
  height: 5px;
  background: #888;
}

.mat {
  fill: #c3d9e8;
  stroke: #333;
  stroke-width: 3;
}

.page {
  fill: #fff;
}

.page-edge {
  fill: none;
  stroke: #7fabd0;
  stroke-width: 3;
  stroke-dasharray: 4 2;
}

.grid {
  stroke: #c9dded;
  stroke-width: 2;
}

.grid.middle {
  stroke: #77a5cc;
}

.mark {
  fill: #6fa1ca;
}

.mat-num {
  font: 10px "Liberation Sans", sans-serif;
  fill: #8db4d4;
  text-anchor: middle;
}

.ruler {
  fill: #fff;
}

.tick {
  stroke: #222;
  stroke-width: 2;
}

.axis {
  stroke: #333;
  stroke-width: 2;
}

.num {
  font: 15px "Liberation Sans", sans-serif;
  fill: #444;
  text-anchor: middle;
}

.cursor {
  stroke: #f33;
  stroke-width: 2;
  stroke-dasharray: 5 3;
}

.splitter {
  flex: none;
  width: 19px;
  background: linear-gradient(90deg, #efefef 4px, #fff 4px, #fff 7px, #efefef 7px);
  border-right: 3px solid #777;
}

/* Right panels */
.panels {
  flex: none;
  width: 490px;
  display: flex;
  flex-direction: column;
  border-right: 2px solid #222;
}

.file-panel {
  flex: 1;
  min-height: 0;
}

.panel-title {
  display: flex;
  align-items: center;
  justify-content: space-between;
  height: 41px;
  padding: 0 15px 2px;
  background: linear-gradient(#d3e9fc 50%, #b3caf9 50%);
}

.panel-title h2 {
  font-size: 20px;
  line-height: 24px;
  padding-bottom: 3px;
}

.panel-title svg {
  width: 28px;
  height: 28px;
}

.scroll-area {
  display: flex;
  height: 864px;
}

.track {
  width: 37px;
  border-left: 2px solid #fff;
  padding: 29px 0 0 13px;
}

.track i {
  display: block;
  width: 9px;
  height: 32px;
  background: #888;
}

.settings {
  flex: 1;
  padding: 19px 6px 0 16px;
}

.row {
  display: flex;
  align-items: center;
}

.select-row {
  height: 38px;
  margin-bottom: 18px;
  padding-left: 15px;
  gap: 8px;
}

.select-row label {
  width: 60px;
  padding-top: 6px;
}

.select-row:first-child label {
  width: 144px;
}

.select-row select {
  font-size: 20px;
}

#dir {
  font-size: 22px;
}

.settings hr {
  height: 4px;
  margin: 24px 0 0;
  border: none;
  background: #777;
}

.check {
  display: flex;
  align-items: center;
  gap: 5px;
  margin-left: 17px;
}

.check input {
  appearance: none;
  width: 24px;
  height: 24px;
  border: 2px solid #777;
  border-radius: 5px;
  background: #f6f6f6;
}

.check input:checked {
  border-color: #0a6cc4;
  background: #0a6cc4;
}

.check input:checked::after {
  content: "";
  display: block;
  width: 5px;
  height: 10px;
  margin: 2px 0 0 7px;
  border: solid #fff;
  border-width: 0 2px 2px 0;
  transform: rotate(45deg);
}

.settings hr + .check {
  margin-top: 16px;
}

.spin-row {
  height: 42px;
  margin-top: 15px;
  padding-left: 54px;
}

.check + .spin-row {
  margin-top: 20px;
}

.spin-row label {
  width: 115px;
}

.spin-row + .spin-row label {
  width: 79px;
  margin-left: 36px;
}

.spin {
  display: flex;
  align-items: center;
  width: 148px;
  height: 42px;
  padding-right: 5px;
  background: #fff;
  border-bottom: 2px solid #888;
  border-radius: 3px;
}

.spin input {
  width: 115px;
  padding: 0 5px 4px;
  border: none;
  background: none;
  font-size: 20px;
}

.spin > span {
  display: flex;
  flex-direction: column;
  gap: 3px;
}

.spin button {
  width: 28px;
  height: 16px;
  border: 1px solid #ccc;
  background: #f8f8f8;
  font-size: 11px;
  line-height: 12px;
}

.guide-row {
  height: 38px;
  margin-top: 18px;
  gap: 97px;
}

.edit {
  width: 135px;
  height: 38px;
  border: 1px solid #ccc;
  border-radius: 7px;
  background: #fdfdfd;
}

.guide-row + hr {
  margin-top: 21px;
}

.opacity-label {
  display: block;
  margin: 19px 0 0 17px;
}

.opacity-row {
  margin: 11px 0 0 32px;
  gap: 38px;
  font-size: 20px;
}

input[type="range"] {
  appearance: none;
  height: 40px;
  background: none;
}

input[type="range"]::-webkit-slider-runnable-track {
  height: 8px;
  border: 1px solid #d0d0d0;
  background: #e8e8e8;
}

input[type="range"]::-webkit-slider-thumb {
  appearance: none;
  width: 19px;
  height: 40px;
  margin-top: -17px;
  background: #0a6fc9;
}

#opacity {
  width: 271px;
}

.checks {
  display: flex;
  flex-direction: column;
  gap: 16px;
  margin-top: 28px;
}

.checks .row {
  height: 28px;
  gap: 44px;
}

.swatch {
  width: 50px;
  height: 38px;
  border: 2px solid #f6f6f6;
  border-radius: 4px;
  background: #fdfdfd;
}

.layer-panel {
  flex: none;
  height: 389px;
}

.layer-panel .panel-title {
  height: 42px;
}

.layer-head {
  display: flex;
  align-items: center;
  height: 41px;
  padding: 0 20px 0 7px;
  background: linear-gradient(#969696 50%, #868686 50%);
  border: 1px solid #777;
  font-size: 20px;
}

.eye {
  width: 30px;
  height: 20px;
  margin-right: 3px;
}

.lock {
  width: 24px;
  height: 30px;
}

.layer-head span {
  margin: 0 auto 8px 70px;
}

.menu-icon {
  width: 26px;
  height: 16px;
}

.layer-body {
  display: flex;
  height: 212px;
}

.layer-list {
  flex: 1;
  background: #323232;
}

.layer-body .track i {
  width: 3px;
}

.layer-actions {
  display: flex;
  gap: 27px;
  padding: 27px 0 0 24px;
}

.layer-actions svg {
  width: 28px;
  height: 28px;
}

/* Rail on the right edge */
.rail {
  flex: none;
  width: 73px;
  display: flex;
  flex-direction: column;
  background: #bfb8a4;
}

.rail-top {
  flex: 1;
  padding-top: 41px;
  border-bottom: 4px solid #f4f2ec;
}

.rail-bottom {
  height: 393px;
  margin-top: 5px;
  padding-top: 42px;
  border-top: 3px solid #888;
  border-bottom: 2px solid #555;
  background: linear-gradient(#bfb8a4 373px, #fff 373px, #fff 377px, #bfb8a4 377px);
}

.rail button {
  display: flex;
  align-items: center;
  justify-content: center;
  width: 64px;
  height: 56px;
  margin-bottom: 22px;
}

.rail svg {
  width: 56px;
  height: 56px;
}

.rail .on {
  width: 67px;
  height: 70px;
  margin-bottom: 13px;
  padding-right: 2px;
  border: 2px solid #aaa;
  border-left: none;
  border-radius: 0 8px 8px 0;
  background: #eeebdf;
}

.rail-bottom .on {
  margin-bottom: 16px;
}

.rail .aa {
  width: 56px;
  margin: 0 0 0 4px;
  border: 2px solid #999;
  border-radius: 7px;
  background: #f8f8f8;
}

.rail text {
  font-family: "Liberation Sans", sans-serif;
}

.rail .help {
  font-weight: bold;
  fill: #fff;
}

/* Library dialog */
.dialog {
  position: absolute;
  left: 561px;
  top: 442px;
  width: 1271px;
  height: 543px;
  display: flex;
  flex-direction: column;
  border: 1px solid #aaa;
  border-radius: 8px;
  background: #efefef;
  box-shadow: 0 8px 24px rgba(0, 0, 0, 0.2);
  overflow: hidden;
}

.dialog-title {
  display: flex;
  justify-content: space-between;
  height: 56px;
  padding: 13px 0 0 13px;
  background: #eef3fa;
}

.dialog-title h2 {
  font-size: 22px;
}

.dialog-title button {
  width: 38px;
  height: 38px;
  background: #c2494d;
  color: #fff;
  border: 1px solid #993a3e;
}

.dialog-tabs {
  display: flex;
  height: 42px;
  align-items: center;
  background: linear-gradient(#969696 50%, #868686 50%);
  border-top: 1px solid #777;
}

.dialog-tabs button {
  width: 122px;
  height: 41px;
  padding: 0 0 9px 6px;
  border: 2px solid #777;
  outline: 1px solid #aaa;
  outline-offset: -4px;
  font-size: 19px;
  text-align: left;
}

.dialog-tabs .current {
  border-color: #efefef;
  background: #efefef;
  outline: none;
}

.dialog-tabs .menu-icon {
  margin: 0 18px 2px auto;
}

.dialog-body {
  flex: 1;
  display: flex;
  gap: 10px;
  padding: 10px 2px 4px 0;
}

.pane {
  border-top: 4px solid #777;
  border-left: 3px solid #777;
  border-right: 2px solid #fff;
  border-bottom: 2px solid #fff;
}

.tree-pane {
  width: 369px;
  padding: 15px 0 0 17px;
}

.tree-tools {
  display: flex;
  gap: 15px;
}

.tree-tools button, .search-row button {
  display: flex;
  align-items: center;
  justify-content: center;
  width: 36px;
  height: 38px;
  border: 1px solid #ccc;
  border-radius: 7px;
  background: #fcfcfc;
}

.tree-tools button:disabled {
  opacity: 0.6;
}

.tree-tools svg {
  width: 28px;
  height: 28px;
}

.tree-box {
  position: relative;
  width: 319px;
  height: 317px;
  margin-top: 25px;
  border: 2px solid #8a8f98;
  background: #efefef;
}

.tree {
  width: 283px;
  height: 281px;
  overflow: hidden;
  padding-left: 15px;
  background: #fff;
  font-size: 19px;
  line-height: 30px;
  white-space: nowrap;
}

.tree svg {
  flex: none;
  width: 28px;
  height: 24px;
}

.root, .tree li {
  display: flex;
  align-items: center;
  height: 30px;
}

.root button {
  width: 17px;
  height: 17px;
  margin-right: 11px;
  border: 1px solid #999;
  border-radius: 2px;
  color: #2a5599;
  font-size: 14px;
  line-height: 12px;
}

.root a {
  margin-left: 8px;
}

.tree ul {
  margin: 0 0 0 8px;
  padding: 0 0 0 34px;
  border-left: 2px dotted #999;
  list-style: none;
}

.tree li::before {
  content: "";
  flex: none;
  width: 18px;
  height: 30px;
  border-left: 2px dotted #999;
  background: repeating-linear-gradient(90deg, #999 0 2px, #fff 2px 4px) 0 14px / 18px 2px no-repeat;
}

.tree li a {
  margin-left: 4px;
  padding: 0 4px;
}

.tree .picked {
  background: #efefef;
}

.thumb-v {
  position: absolute;
  right: 14px;
  top: 45px;
  width: 4px;
  height: 97px;
  background: #888;
}

.thumb-h {
  position: absolute;
  left: 34px;
  bottom: 15px;
  width: 158px;
  height: 4px;
  background: #888;
}

.shape-pane {
  flex: 1;
  padding: 12px 0 0 11px;
}

.search-row {
  display: flex;
  align-items: flex-start;
  height: 48px;
  padding: 2px 20px 0 12px;
}

.search-row .view {
  width: 43px;
  height: 33px;
  margin-right: 3px;
}

.search-row .view svg {
  width: 28px;
  height: 20px;
}

.search-row input {
  flex: 1;
  height: 29px;
  margin: 0 26px;
  border: none;
  border-bottom: 2px solid #888;
  background: #fff;
}

.search-row .find {
  width: 38px;
}

.search-row .find svg {
  width: 28px;
  height: 28px;
}

.shape-area {
  display: flex;
  height: 312px;
}

.shapes {
  display: grid;
  grid-template-columns: repeat(8, 87px);
  grid-auto-rows: 87px;
  gap: 6px;
  width: 806px;
  height: 290px;
  margin-top: 21px;
  padding: 6px;
  overflow: hidden;
  background: #dcdcdc;
}

.shapes button {
  border: 2px solid #444;
  border-width: 2px 3px 3px 2px;
  border-radius: 15px;
  background: #fff;
}

.shapes svg {
  width: 72px;
  height: 72px;
  margin: 0 auto;
  overflow: visible;
  fill: none;
  stroke: #777;
}

.shapes svg.blue {
  stroke: #5f7598;
}

.shapes svg.flower {
  fill: #ff6f08;
  stroke: none;
}

.flower circle {
  fill: #fbec15;
}

.shapes svg.red {
  fill: #f00;
  stroke: none;
}

.shapes .mouth {
  fill: #fff;
}

.shapes svg.gear {
  stroke: #8b8b8b;
}

.shape-area .track {
  height: 306px;
  margin-left: 16px;
  padding: 32px 0 0 12px;
}

.shape-area .track i {
  width: 2px;
}

.size {
  display: block;
  width: 786px;
  margin: 0 0 0 11px;
}

input.size::-webkit-slider-thumb {
  width: 11px;
  height: 24px;
  margin-top: -9px;
}
```
